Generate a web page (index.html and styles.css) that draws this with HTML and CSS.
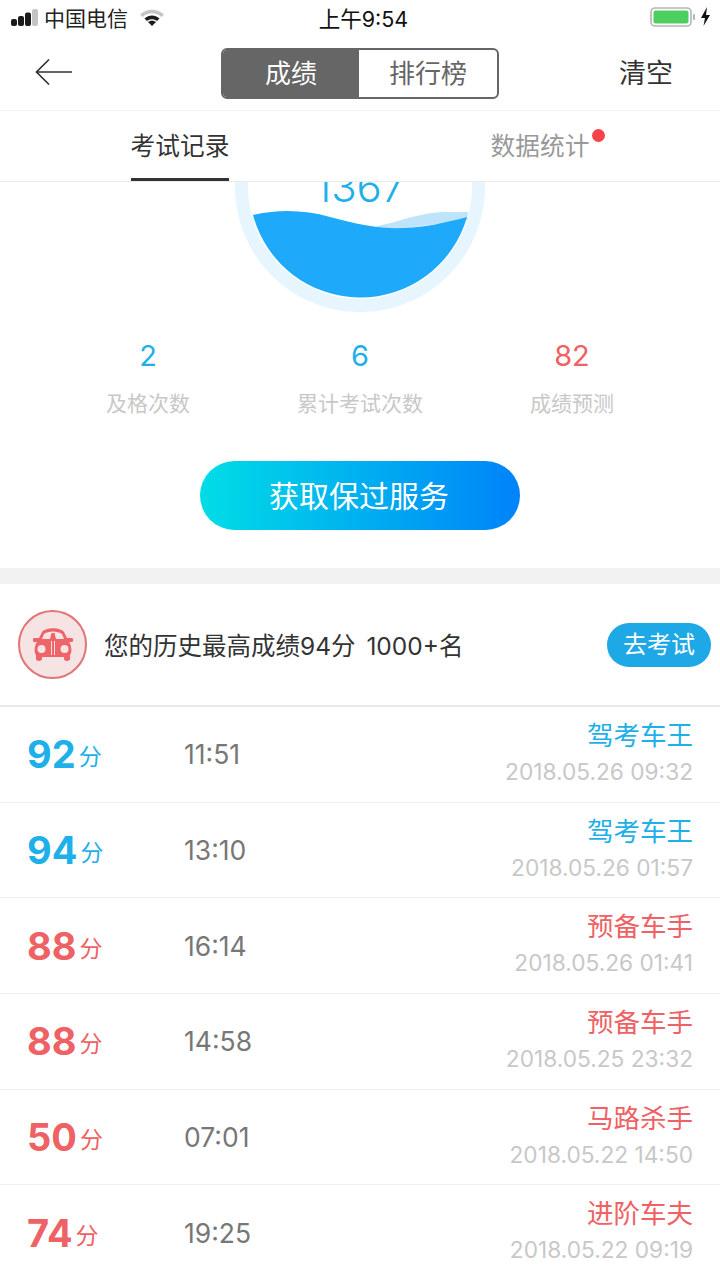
FILE: index.html
```html
<!DOCTYPE html>
<html lang="zh-CN">
<head>
    <meta charset="UTF-8">
    <meta name="viewport" content="width=device-width, initial-scale=1.0">
    <link rel="stylesheet" href="styles.css">
    <title>成绩</title>
</head>
<body>
    <!-- 状态栏 -->
    <div class="status-bar">
        <div class="status-left">
            <svg class="signal" width="28" height="17" viewBox="0 0 28 17">
                <rect x="0" y="10" width="6" height="7" rx="2" fill="#1c1c1c"/>
                <rect x="7" y="7" width="6" height="10" rx="2" fill="#1c1c1c"/>
                <rect x="14" y="3.500" width="6" height="13.500" rx="2" fill="#1c1c1c"/>
                <rect x="21" y="0" width="6" height="17" rx="2" fill="#c4c4c4"/>
            </svg>
            <span class="carrier">中国电信</span>
            <svg class="wifi" width="24" height="17" viewBox="0 0 24 17">
                <path d="M0 5.500C6.500 -1 17.500 -1 24 5.500L21.500 8C16 3 8 3 2.500 8Z" fill="#c4c4c4"/>
                <path d="M4.500 9.500C9 5.500 15 5.500 19.500 9.500L17 12C14 9.500 10 9.500 7 12Z" fill="#1c1c1c"/>
                <path d="M8 13C10.500 11 13.500 11 16 13L12 17Z" fill="#1c1c1c"/>
            </svg>
        </div>
        <div class="status-time">上午9:54</div>
        <div class="status-right">
            <svg width="66" height="20" viewBox="0 0 66 20">
                <rect x="1" y="1" width="40" height="18" rx="4" fill="none" stroke="#b5b5b5" stroke-width="1.600"/>
                <rect x="3.500" y="3.500" width="35" height="13" rx="2" fill="#4ccf5e"/>
                <rect x="43" y="7" width="2" height="6" rx="1" fill="#b5b5b5"/>
                <path d="M57 0 51 11H55L53.500 19 60 8H56Z" fill="#111"/>
            </svg>
        </div>
    </div>

    <!-- 导航 -->
    <div class="nav">
        <svg class="back" width="38" height="28" viewBox="0 0 38 28">
            <path d="M37 14H2M14 1.500 1.500 14 14 26.500" fill="none" stroke="#333" stroke-width="1.700"/>
        </svg>
        <div class="switch">
            <div class="switch-item active">成绩</div>
            <div class="switch-item">排行榜</div>
        </div>
        <div class="clear">清空</div>
    </div>

    <!-- 标签 -->
    <div class="tabs">
        <div class="tab"><span class="tab-label current">考试记录</span></div>
        <div class="tab"><span class="tab-label muted">数据统计<i class="dot"></i></span></div>
    </div>

    <!-- 分数仪表 -->
    <div class="gauge">
        <svg width="260" height="132" viewBox="0 0 260 132">
            <circle cx="130" cy="5" r="118.500" fill="none" stroke="#e6f5fe" stroke-width="13"/>
            <path d="M147 44C170 40 190 30 215 30H238L237 38 147 50Z" fill="#bfe3fb"/>
            <path d="M23 33C50 27 75 28 100 35 130 43 150 47 175 46 195 45 215 41 237 35A111 111 0 0 1 23 33Z" fill="#1fa9fb"/>
            <text class="gauge-num" x="130" y="20" text-anchor="middle">1367</text>
        </svg>
    </div>

    <!-- 统计 -->
    <div class="stats">
        <div class="stat">
            <div class="stat-num blue">2</div>
            <div class="stat-label">及格次数</div>
        </div>
        <div class="stat">
            <div class="stat-num blue">6</div>
            <div class="stat-label">累计考试次数</div>
        </div>
        <div class="stat">
            <div class="stat-num red">82</div>
            <div class="stat-label">成绩预测</div>
        </div>
    </div>

    <div class="service">
        <div class="service-btn">获取保过服务</div>
    </div>

    <div class="band"></div>

    <!-- 最高成绩 -->
    <div class="best">
        <div class="car">
            <svg width="42" height="33" viewBox="0 0 42 33">
                <path d="M10 4C14 -1 28 -1 32 4L35 10H40C41.500 10 41.500 14 40 14H37C40 18 40 25 38 27V31C38 33.500 32 33.500 32 31V29H10V31C10 33.500 4 33.500 4 31V27C2 25 2 18 5 14H2C.5 14 .5 10 2 10H7Z" fill="#ee6468"/>
                <path d="M12 6C16 2.500 26 2.500 30 6L32 11H24L22.500 5H19.500L18 11H10Z" fill="#f6e4e4"/>
                <circle cx="9.500" cy="21" r="4" fill="#f6e4e4"/>
                <circle cx="32.500" cy="21" r="4" fill="#f6e4e4"/>
                <path d="M19.500 13V27M22.500 13V27" stroke="#f6e4e4" stroke-width="1"/>
            </svg>
        </div>
        <div class="best-text">您的历史最高成绩94分 1000+名</div>
        <div class="go-btn">去考试</div>
    </div>

    <!-- 考试记录 -->
    <div class="records">
        <div class="record">
            <div class="score blue"><b>92</b><span>分</span></div>
            <div class="used">11:51</div>
            <div class="info"><div class="title blue">驾考车王</div><div class="date">2018.05.26 09:32</div></div>
        </div>
        <div class="record">
            <div class="score blue"><b>94</b><span>分</span></div>
            <div class="used">13:10</div>
            <div class="info"><div class="title blue">驾考车王</div><div class="date">2018.05.26 01:57</div></div>
        </div>
        <div class="record">
            <div class="score red"><b>88</b><span>分</span></div>
            <div class="used">16:14</div>
            <div class="info"><div class="title red">预备车手</div><div class="date">2018.05.26 01:41</div></div>
        </div>
        <div class="record">
            <div class="score red"><b>88</b><span>分</span></div>
            <div class="used">14:58</div>
            <div class="info"><div class="title red">预备车手</div><div class="date">2018.05.25 23:32</div></div>
        </div>
        <div class="record">
            <div class="score red"><b>50</b><span>分</span></div>
            <div class="used">07:01</div>
            <div class="info"><div class="title red">马路杀手</div><div class="date">2018.05.22 14:50</div></div>
        </div>
        <div class="record">
            <div class="score red"><b>74</b><span>分</span></div>
            <div class="used">19:25</div>
            <div class="info"><div class="title red">进阶车夫</div><div class="date">2018.05.22 09:19</div></div>
        </div>
    </div>
</body>
</html>
```

FILE: styles.css
```css
* {
    box-sizing: border-box;
}

html, body {
    margin: 0;
    padding: 0;
    height: 1280px;
    overflow: hidden;
}

body {
    font-family: "Inter", "Noto Sans CJK SC", sans-serif;
    background-color: #fff;
    color: #333;
}

.blue {
    color: #1fb0ea;
}

.red {
    color: #ee6164;
}

/* 状态栏 */
.status-bar {
    height: 34px;
    padding: 0 4px 0 11px;
    display: grid;
    grid-template-columns: 1fr auto 1fr;
    align-items: center;
}

.status-left {
    display: flex;
    align-items: center;
}

.carrier {
    margin-left: 5px;
    font-size: 21px;
    color: #222;
}

.wifi {
    margin-left: 12px;
}

.status-time {
    font-size: 21.500px;
    color: #111;
}

.status-right {
    display: flex;
    justify-content: flex-end;
}

/* 导航 */
.nav {
    height: 77px;
    padding-top: 2px;
    border-bottom: 1px solid #f2f2f2;
    display: grid;
    grid-template-columns: 1fr 278px 1fr;
    align-items: center;
}

.back {
    margin: 0 0 2px 35px;
}

.switch {
    height: 51px;
    border: 2px solid #666;
    border-radius: 6px;
    display: flex;
    overflow: hidden;
}

.switch-item {
    flex: 1;
    text-align: center;
    line-height: 47px;
    font-size: 26px;
    color: #666;
}

.switch-item.active {
    flex: 0 0 136px;
    background-color: #666;
    color: #fff;
}

.clear {
    justify-self: end;
    margin: 0 47px 4px 0;
    font-size: 27px;
    color: #333;
}

/* 标签 */
.tabs {
    height: 71px;
    border-bottom: 1px solid #ebebeb;
    display: grid;
    grid-template-columns: 1fr 1fr;
}

.tab {
    text-align: center;
}

.tab-label {
    display: inline-block;
    height: 70px;
    line-height: 71px;
    font-size: 24.700px;
    position: relative;
}

.tab-label.current {
    color: #333;
    border-bottom: 3px solid #333;
}

.tab-label.muted {
    color: #999;
}

.dot {
    position: absolute;
    top: 18px;
    right: -16px;
    width: 13px;
    height: 13px;
    border-radius: 50%;
    background-color: #f6434a;
}

/* 分数仪表 */
.gauge {
    height: 132px;
    display: flex;
    justify-content: center;
}

.gauge-num {
    font-size: 42px;
    font-weight: 300;
    fill: #1fb0ea;
}

/* 统计 */
.stats {
    height: 147px;
    padding: 22px 42px 0;
    display: grid;
    grid-template-columns: 1fr 1fr 1fr;
    text-align: center;
}

.stat-num {
    font-size: 29px;
    line-height: 40px;
}

.stat-label {
    margin-top: 14px;
    font-size: 21px;
    line-height: 28px;
    color: #c8c8c8;
}

.service {
    height: 107px;
    display: flex;
    justify-content: center;
}

.service-btn {
    width: 320px;
    height: 69px;
    padding-right: 2px;
    border-radius: 35px;
    background: linear-gradient(90deg, #00dde6, #0083fa);
    color: #fff;
    font-size: 30px;
    line-height: 71px;
    text-align: center;
}

.band {
    height: 16px;
    background-color: #f2f2f2;
}

/* 最高成绩 */
.best {
    height: 123px;
    padding: 0 9px 0 18px;
    border-bottom: 2px solid #e9e9e9;
    display: flex;
    align-items: center;
}

.car {
    width: 69px;
    height: 69px;
    border: 2px solid #e07477;
    border-radius: 50%;
    background-color: #f6e4e4;
    display: flex;
    align-items: center;
    justify-content: center;
}

.best-text {
    flex: 1;
    margin-left: 17px;
    font-size: 24.500px;
    word-spacing: 4px;
    color: #333;
}

.go-btn {
    width: 104px;
    height: 44px;
    border-radius: 22px;
    background-color: #1fa8e6;
    color: #fff;
    font-size: 24px;
    line-height: 44px;
    text-align: center;
}

/* 考试记录 */
.record {
    height: 95.700px;
    padding: 0 27px;
    border-bottom: 1px solid #efefef;
    display: flex;
    align-items: center;
}

.score {
    width: 157px;
}

.score b {
    font-size: 38px;
    font-weight: bold;
}

.score span {
    margin-left: 3px;
    font-size: 23px;
    vertical-align: 3px;
}

.used {
    flex: 1;
    font-size: 26.500px;
    color: #777;
}

.info {
    padding-bottom: 4px;
    text-align: right;
}

.title {
    font-size: 26.500px;
    line-height: 34px;
}

.date {
    margin-top: 5px;
    font-size: 22.700px;
    line-height: 30px;
    color: #c8c8c8;
}
```
